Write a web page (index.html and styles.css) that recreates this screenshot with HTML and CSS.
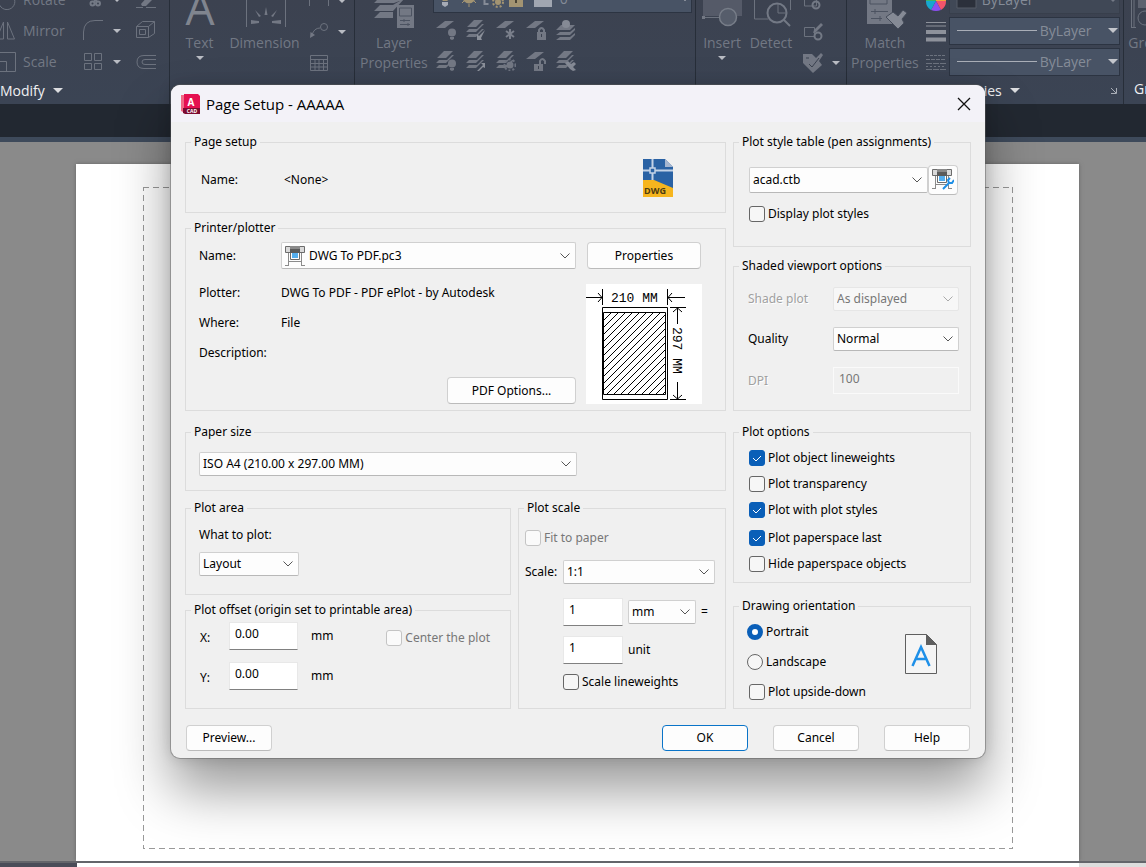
FILE: index.html
```html
<!DOCTYPE html>
<html lang="en">
<head>
<meta charset="utf-8">
<title>Page Setup - AAAAA</title>
<link rel="stylesheet" href="styles.css">
</head>
<body>
<svg class="defs" aria-hidden="true">
  <symbol id="sheet" viewBox="0 0 20 20"><path d="M0 8 9 1h9L9 8z"/></symbol>
  <symbol id="stack" viewBox="0 0 20 20"><path d="M1 7 8 0h9l-7 7zM0 12l3-3h8l5-5h2l-8 8zM0 17l3-3h8l5-5h2l-8 8z"/></symbol>
  <symbol id="bulb" viewBox="0 0 20 20"><circle cx="16" cy="12.500" r="4"/><path d="M14 17h4v2l-2 1-2-1z"/></symbol>
  <symbol id="plotter" viewBox="0 0 20 20">
    <path d="M.5 .5h19v6H.5z" fill="#d9d9d9" stroke="#6c6c6c"/>
    <path d="M5 0h10v3H5z" fill="#8a8a8a"/><path d="M5 3h10v4H5z" fill="#5b5b5b"/>
    <path d="M5.500 7v6.500h9V7" fill="#fff" stroke="#6c6c6c"/><path d="M7 7h6v5H7z" fill="#55aeee"/>
    <path d="M3.500 7v12M16.500 7v12M3 15.500h14M0 19.500h4M16 19.500h4" stroke="#8b8b8b" fill="none"/>
  </symbol>
</svg>

<div class="app">
  <header class="ribbon">
    <section class="panel modify">
      <div class="tools">
        <svg class="ico" viewBox="-4 -11 22 22"><path d="M-1 0a8 8 0 1 0 15-2" class="ln"/></svg><span>Rotate</span>
        <svg class="ico" viewBox="84 -10 22 22"><path d="M94 -4l4 7M99-4l-4 7" class="ln2"/><circle cx="93.500" cy="4.500" r="2" class="ln2"/><circle cx="99" cy="4.500" r="2" class="ln2"/></svg><i class="tri"></i>
        <svg class="ico" viewBox="134 -10 22 22"><path d="M140 5l8-9 5 3-8 8h-4z" class="fl"/><path d="M135 8.500h7M145 8.500h10" class="ln"/></svg>
        <svg class="ico" viewBox="-4 20 22 22"><path d="M3.500 22v17h-7zM7.500 22v17h7z" class="ln"/></svg><span>Mirror</span>
        <svg class="ico" viewBox="84 20 22 22"><path d="M84.500 40V32Q85 20.500 96 20.500h8" class="ln"/></svg><i class="tri"></i>
        <svg class="ico" viewBox="134 20 22 22"><path d="M135.500 26.500h12v11h-12zM138.500 29.500h6v5h-6zM135.500 26.500l6-5h12v12l-6 4M147.500 26.500l6-5" class="ln"/></svg>
        <svg class="ico" viewBox="-4 50 22 22"><path d="M-4 51.500H15.500v19H-4M-4 60.500H6.500v10" class="ln"/></svg><span>Scale</span>
        <svg class="ico" viewBox="84 50 22 22"><path d="M85.500 52.500h7v7h-7zM95.500 52.500h7v7h-7zM85.500 62.500h7v6h-7zM95.500 62.500h7v6h-7z" class="ln"/></svg><i class="tri"></i>
        <svg class="ico" viewBox="134 50 22 22"><path d="M155 54.500h-12q-7 0-7 6.500t7 6.500h12M155 58.500h-11q-3 0-3 2.500t3 2.500h11" class="ln"/></svg>
      </div>
      <h2>Modify <i class="tri big"></i></h2>
    </section>

    <section class="panel annot">
      <div class="cols">
        <button class="large"><svg viewBox="177 -15 44 46"><text x="199" y="25" class="bigA">A</text></svg><span>Text</span><i class="tri"></i></button>
        <button class="large"><svg viewBox="243 -15 44 46"><path d="M246.500-15V27M285.500-15V27" class="ln"/><path d="M264.500 15l1.500-8 1.500 8zM259 17l-4-7 6 6zM273 17l4-7-6 6zM259 21l-8-1v4l8-1zM272 21l9-1v4l-9-1z" class="fl"/></svg><span>Dimension</span></button>
        <div class="mini">
          <svg class="ico" viewBox="309 -10 22 22"><path d="M310.500-10V6M329.500-10V6" class="ln"/></svg><i class="tri"></i>
          <svg class="ico" viewBox="309 20 22 22"><circle cx="325" cy="26" r="3.500" class="ln"/><path d="M321 27q-6 0-8 7" class="ln"/><path d="M311 37l.500-6 4.500 3z" class="fl"/></svg><i class="tri"></i>
          <svg class="ico" viewBox="309 50 22 22"><path d="M311.500 53.500h17v15h-17zM311 57.500h18M311 61.500h18M311 65h18M316 58v10M320 58v10M324.500 58v10" class="ln"/></svg>
        </div>
      </div>
    </section>

    <section class="panel layers">
      <div class="cols">
        <button class="large"><svg viewBox="372 -15 44 46"><path d="M374 3l9-9h26l-4 5-11 4zM374 11l6-6h13l12-7-12 13zM374 18l6-6h13v6z" class="fl"/><path d="M397 5h17v23h-17z" class="fl"/><path d="M399.500 8h12v8h-12zM400 20.500h10M400 24.500h10M404 19v3M408 23v3" stroke="#4c5361" fill="none"/></svg><span>Layer<br>Properties</span></button>
        <div class="layerbox">
          <div class="combo"><select aria-label="Layer"><option>0</option></select>
            <svg class="over" viewBox="434 -12 124 24" width="124" height="24"><path d="M441-4h11q0 4-4 7h-4q-3-3-3-7z" fill="#a39472"/><path d="M443 4h6v3l-3 2-3-2z" fill="#a5aab5"/><circle cx="470" cy="-1" r="6.500" fill="#a39472"/><path d="M463 5l3-3M477 5l-3-3M470 6v3" stroke="#a39472"/><path d="M485.500-5V6h4" stroke="#858b97" stroke-width="2" fill="none"/><circle cx="499" cy="4" r="3" fill="#a39472"/><circle cx="499" cy="4" r="5" fill="none" stroke="#a39472" stroke-width="2" stroke-dasharray="2 2"/><path d="M510-2h14V9h-14z" fill="#a39472"/><path d="M517 1v4" stroke="#4a4436" stroke-width="2"/><path d="M535-10h18V9h-18z" fill="#a0a6b1"/></svg></div>
          <div class="layertools">
            <svg class="ico20"><use href="#sheet"/><use href="#bulb"/></svg>
            <svg class="ico20"><use href="#stack"/><path d="M11 20v-6l2 2 6-6-4 8 1 2z" fill="#8b909a"/></svg>
            <svg class="ico20"><use href="#sheet"/><path d="M14 9v10M10 11l8 6M18 11l-8 6" stroke="#7a7f8b" stroke-width="2"/></svg>
            <svg class="ico20"><use href="#sheet"/><path d="M11 12h9v8h-9z"/><path d="M13 12v-2q2.500-4 5 0v2" class="ln2"/><path d="M15.500 14v3" stroke="#3b4250"/></svg>
            <svg class="ico20"><path d="M0 10l5-5h14l-5 5zM0 15l4-3h10l5-4v2l-5 5zM0 20l4-3h10l5-4v2l-5 5z"/><circle cx="10" cy="4" r="4" fill="#858a95"/></svg>
            <svg class="ico20"><use href="#stack"/><use href="#bulb"/></svg>
            <svg class="ico20"><use href="#stack"/><path d="M11 20l6-6-2-2h4v5l-2-1-5 5z" fill="#8b909a"/></svg>
            <svg class="ico20"><use href="#stack"/><circle cx="14" cy="14" r="3.500"/><circle cx="14" cy="14" r="5.500" fill="none" stroke="#6d7380" stroke-width="2" stroke-dasharray="2 2"/></svg>
            <svg class="ico20"><use href="#sheet"/><path d="M8 13h9v7H8z"/><path d="M14 13v-3q2-4 5 0v3" class="ln2"/><path d="M12.500 15v3" stroke="#3b4250"/></svg>
            <svg class="ico20"><use href="#stack"/><path d="M9 12l3-2 3 3 3-2 2 2-3 3 3 3-3 1-3-2z" fill="#858a95"/></svg>
          </div>
        </div>
      </div>
    </section>

    <section class="panel block">
      <div class="cols">
        <button class="large"><svg viewBox="700 -15 44 46"><path d="M703-15h39V16H703z" class="fl" opacity=".45"/><path d="M703 17.500h20" class="ln"/><path d="M702 16h3v3h-3z" class="fl"/><circle cx="728" cy="17" r="8.500" fill="#565d6b" stroke="#777d88" stroke-width="1.500"/></svg><span>Insert</span><i class="tri"></i></button>
        <button class="large"><svg viewBox="749 -15 44 46"><path d="M754.500-15V19h14M790.500-15V10" class="ln"/><circle cx="777" cy="13" r="9.500" class="ln2"/><path d="M784 20l6 6" class="ln2"/><path d="M778 4v9h9" class="ln"/></svg><span>Detect</span></button>
        <div class="mini">
          <svg class="ico" viewBox="801 -10 22 22"><path d="M803.500-6h12V6h-12z" class="ln"/><circle cx="815" cy="5" r="3.500" class="ln2"/></svg><i></i>
          <svg class="ico" viewBox="801 20 22 22"><path d="M803.500 26.500h10v9h-10z" class="ln"/><circle cx="817" cy="35" r="3.500" class="ln2"/><path d="M812 32l1-3 7-7 2 2-7 7z" class="fl"/></svg><i></i>
          <svg class="ico" viewBox="801 50 22 22"><path d="M802 52h9l4 4 5-5 2 2-4 6 3 4-9 8-10-10z" class="fl"/><path d="M805 56h3M808 62l3 3 7-9" stroke="#3b4250" fill="none"/></svg><i class="tri"></i>
        </div>
      </div>
    </section>

    <section class="panel props">
      <div class="cols">
        <button class="large"><svg viewBox="863 -15 44 46"><path d="M867-15h25V24h-25z" class="fl"/><path d="M870-10h17V4h-17zM871 11.500h17M871 18.500h11M875 9v5M880 16v5" stroke="#4c5361" fill="none"/><path d="M886 17l7-5 5 4 5-6 4 3-5 6 2 4-6 6z" fill="#858a95" stroke="#454c5a"/></svg><span>Match<br>Properties</span></button>
        <div class="mini one">
          <svg class="ico" viewBox="925 -10 22 22"><path d="M936 1V-9A10 10 0 0 1 946 1z" fill="#f0a43a"/><path d="M936 1h10a10 10 0 0 1-5 9z" fill="#f2546b"/><path d="M936 1l5 9q-5 2-10 0z" fill="#8b4ff0"/><path d="M936 1l-5 9a10 10 0 0 1-5-9z" fill="#16a7cf"/><path d="M936 1h-10A10 10 0 0 1 936-9z" fill="#39b56b"/></svg>
          <svg class="ico" viewBox="925 20 22 22"><path d="M926 21.500h20M926 25h20" stroke="#8e929b"/><path d="M926 31h20M926 38.500h20" stroke="#8e929b" stroke-width="4"/></svg>
          <svg class="ico" viewBox="925 50 22 22"><path d="M926 53.500h20" class="ln" stroke-dasharray="3 1"/><path d="M926 57.500h20" class="ln" stroke-dasharray="4 1"/><path d="M926 61.500h20M926 67.500h20" class="ln" stroke-dasharray="6 1"/><path d="M926 64.500h20" class="ln" stroke-dasharray="2 2"/></svg>
        </div>
        <div class="stackbox">
          <div class="combo dimmed"><select aria-label="Color"><option>ByLayer</option></select><svg class="over" width="30" height="24"><path d="M8 0h19v21H8z" fill="#2b303b" stroke="#555b67"/></svg></div>
          <div class="combo"><select aria-label="Lineweight"><option>ByLayer</option></select><svg class="over" width="90" height="24"><path d="M8 12.500h80" stroke="#a9aeb7"/></svg></div>
          <div class="combo"><select aria-label="Linetype"><option>ByLayer</option></select><svg class="over" width="90" height="24"><path d="M8 12.500h80" stroke="#a9aeb7"/></svg></div>
        </div>
      </div>
      <h2>Properties <i class="tri big"></i><svg class="launch" viewBox="0 0 8 8"><path d="M1 1l5 5M6.500 1v5.500H1" stroke="#a9aeb7" fill="none"/></svg></h2>
    </section>

    <section class="panel groups">
      <div class="cols"><button class="large"><svg viewBox="1127 -15 44 46"><path d="M1134-15V27M1131 27.500h5M1131.500-15V27" class="ln"/><path d="M1138-15h12V8h-12z" class="fl" opacity=".6"/><circle cx="1145" cy="18" r="7" class="ln"/></svg><span>Group</span></button></div>
      <h2>Groups</h2>
    </section>
  </header>
  <div class="tabs"></div>
  <main class="canvas"><div class="paper"><svg class="printable"><rect width="100%" height="100%"/></svg></div></main>
  <footer class="status"><i></i><b></b></footer>
</div>

<form class="dialog" role="dialog" aria-labelledby="dlg-title">
  <header class="titlebar">
    <svg width="20" height="20" viewBox="0 0 20 20"><path d="M0 1h4v18l-4-2z" fill="#f06a86"/><path d="M3 0h14l2 2v12H3z" fill="#e51050"/><path d="M2 14h17v6H4l-2-1z" fill="#7c0c31"/><text x="10" y="12" class="logo-a">A</text><text x="11" y="19" class="logo-cad">CAD</text></svg>
    <h1 id="dlg-title">Page Setup - AAAAA</h1>
    <button type="button" class="close" aria-label="Close"><svg width="14" height="14" viewBox="0 0 14 14"><path d="M1 1l12 12M13 1L1 13" stroke="#111" stroke-width="1.300"/></svg></button>
  </header>

  <div class="body">
    <div class="left">
      <fieldset><legend>Page setup</legend>
        <div class="g-page"><span class="lbl">Name:</span><span>&lt;None&gt;</span>
          <svg class="dwg" width="30" height="38" viewBox="0 0 30 38"><path d="M0 0h22l8 8v30H0z" fill="#2a62a4"/><path d="M22 0v8h8z" fill="#a5b6d0"/><path d="M0 21h11l19 8v9H0z" fill="#f6b51e"/><path d="M0 11.500h30M9.500 0v21" stroke="#c3d2e6" stroke-width="2" fill="none"/><path d="M7 9h5v5H7z" fill="#2a62a4" stroke="#c3d2e6" stroke-width="1.500"/><text x="12" y="35" class="dwg-t">DWG</text></svg>
        </div>
      </fieldset>

      <fieldset class="s6"><legend>Printer/plotter</legend>
        <div class="g-printer">
          <div class="pcol">
            <div class="row"><label class="lbl" for="printer">Name:</label><div class="iconsel"><select id="printer"><option>DWG To PDF.pc3</option></select><svg class="over" width="20" height="20"><use href="#plotter"/></svg></div></div>
            <dl>
              <dt>Plotter:</dt><dd>DWG To PDF - PDF ePlot - by Autodesk</dd>
              <dt>Where:</dt><dd>File</dd>
              <dt>Description:</dt><dd></dd>
            </dl>
            <button type="button" class="btn pdf">PDF Options...</button>
          </div>
          <div class="qcol">
            <button type="button" class="btn">Properties</button>
            <svg class="preview" width="116" height="120" viewBox="586 284 116 120">
              <defs><pattern id="hatch" width="7" height="7" patternUnits="userSpaceOnUse"><path d="M-1 8L8-1M-1 1L1-1M6 8l2-2" stroke="#000"/></pattern></defs>
              <path d="M586 284h116v120H586z" fill="#fff"/>
              <path d="M604 312h61v83h-61z" fill="url(#hatch)"/>
              <path d="M602.500 307.500h65v92h-65zM603.500 312.500h62v82h-62zM602.500 289v16M667.500 289v16M586 297.500h16M598 293l4 4.500-4 4.500M668 297.500h17M672 293l-4 4.500 4 4.500M670 307.500h16M670 399.500h16M677.500 308v16M677.500 382v17M673 312l4.500-4 4.500 4M673 395l4.500 4 4.500-4" stroke="#000" fill="none"/>
              <text x="611" y="302">210 MM</text><text transform="translate(673 327) rotate(90)">297 MM</text>
            </svg>
          </div>
        </div>
      </fieldset>

      <fieldset class="s12"><legend>Paper size</legend>
        <div class="g-paper"><select aria-label="Paper size"><option>ISO A4 (210.00 x 297.00 MM)</option></select></div>
      </fieldset>

      <div class="pair">
        <div class="pairleft">
          <fieldset><legend>Plot area</legend>
            <div class="g-area"><label for="what">What to plot:</label><select id="what"><option>Layout</option></select></div>
          </fieldset>
          <fieldset class="s6"><legend>Plot offset (origin set to printable area)</legend>
            <div class="g-offset">
              <div class="off"><label for="ox">X:</label><input id="ox" type="text" value="0.00"><span>mm</span></div>
              <label class="chk"><input type="checkbox" disabled>Center the plot</label>
              <div class="off"><label for="oy">Y:</label><input id="oy" type="text" value="0.00"><span>mm</span></div>
            </div>
          </fieldset>
        </div>
        <fieldset class="scale"><legend>Plot scale</legend>
          <div class="g-scale">
            <label class="chk"><input type="checkbox" disabled>Fit to paper</label>
            <div class="row sc"><label for="scale">Scale:</label><select id="scale"><option>1:1</option></select></div>
            <div class="row in a"><input type="text" aria-label="Paper units" value="1"><select aria-label="Unit"><option>mm</option></select><span>=</span></div>
            <div class="row in b"><input type="text" id="du" value="1"><label for="du">unit</label></div>
            <label class="chk in c"><input type="checkbox">Scale lineweights</label>
          </div>
        </fieldset>
      </div>
    </div>

    <div class="right">
      <fieldset><legend>Plot style table (pen assignments)</legend>
        <div class="g-style">
          <div class="row"><select aria-label="Plot style table"><option>acad.ctb</option></select><button type="button" class="btn edit" aria-label="Edit"><svg width="22" height="22" viewBox="0 0 22 22"><use href="#plotter" width="20" height="20"/><path d="M11 20l6-6M17 14l-1-3 2-2M17 14l3 0 2-3" stroke="#1e8fe6" stroke-width="2" fill="none"/></svg></button></div>
          <label class="chk"><input type="checkbox">Display plot styles</label>
        </div>
      </fieldset>
      <fieldset class="s10"><legend>Shaded viewport options</legend>
        <div class="g-shade">
          <label for="shade" class="off-l">Shade plot</label><select id="shade" disabled><option>As displayed</option></select>
          <label for="quality">Quality</label><select id="quality"><option>Normal</option></select>
          <label for="dpi" class="off-l">DPI</label><input id="dpi" type="text" value="100" disabled>
        </div>
      </fieldset>
      <fieldset class="s12"><legend>Plot options</legend>
        <div class="g-opts">
          <div><label class="chk"><input type="checkbox" checked>Plot object lineweights</label>
          <label class="chk"><input type="checkbox">Plot transparency</label>
          <label class="chk"><input type="checkbox" checked>Plot with plot styles</label></div>
          <div><label class="chk"><input type="checkbox" checked>Plot paperspace last</label>
          <label class="chk"><input type="checkbox">Hide paperspace objects</label></div>
        </div>
      </fieldset>
      <fieldset class="s14"><legend>Drawing orientation</legend>
        <div class="g-orient">
          <div class="stackcol"><label class="chk"><input type="radio" name="o" checked>Portrait</label>
          <label class="chk"><input type="radio" name="o">Landscape</label>
          <label class="chk ud"><input type="checkbox">Plot upside-down</label></div>
          <svg width="32" height="40" viewBox="0 0 32 40"><path d="M.500.500h21l10 10v29H.500z" fill="#f5f5f5" stroke="#5f5f5f"/><path d="M21 0v11h11z" fill="#5f5f5f"/><path d="M7.500 32L16 13l8.500 19M10.500 25h11" stroke="#1f90e8" stroke-width="2.500" fill="none"/></svg>
        </div>
      </fieldset>
    </div>
  </div>

  <footer class="actions">
    <button type="button" class="btn">Preview...</button>
    <div><button type="submit" class="btn ok">OK</button><button type="button" class="btn">Cancel</button><button type="button" class="btn">Help</button></div>
  </footer>
</form>
</body>
</html>
```
FILE: styles.css
```css
* { box-sizing: border-box; }
body { margin: 0; overflow: hidden; background: #888; }
h1, h2, dl, dd { margin: 0; font-weight: normal; }
button, select, input { font: inherit; color: inherit; margin: 0; }
.defs { position: absolute; width: 0; height: 0; }
.over { position: absolute; pointer-events: none; }

/* application window */
.app { display: flex; flex-direction: column; height: 100vh; font: 14px/20px "Open Sans", "Noto Sans", sans-serif; color: #727884; }
.ribbon { display: flex; height: 104px; background: linear-gradient(#3c4250, #3b4454); overflow: hidden; flex: none; }
.panel { display: flex; flex-direction: column; flex: none; margin-top: -16px; border-right: 1px solid #272e39; }
.panel h2 { display: flex; align-items: center; gap: 8px; height: 30px; font-size: 14px; color: #f0f0f2; }
.cols { display: flex; height: 93px; padding-top: 1px; }
.modify { width: 170px; }
.annot { width: 185px; }
.layers { width: 341px; }
.block { width: 151px; }
.props { width: 277px; }
.groups { flex: 1; border: 0; }
.tools { display: grid; grid-template-columns: 23px 60px 22px 23px 29px; grid-auto-rows: 31px; align-items: center; justify-items: start; }
.tools .tri { justify-self: center; }
.tools .ico:nth-child(5n) { justify-self: end; }
.tools .ico:nth-child(5n+1) { margin-left: -4px; }
.ico { width: 22px; height: 22px; }
.ico20 { width: 20px; height: 20px; fill: #737884; }
.ln { fill: none; stroke: #6c727e; }
.ln2 { fill: none; stroke: #737985; stroke-width: 2; }
.fl { fill: #737884; }
.tri { border: 4px solid transparent; border-top-color: #b9bcc3; border-bottom: 0; }
.tri.big { border-width: 5px; border-bottom: 0; border-top-color: #dcdde0; }
.large { display: flex; flex-direction: column; align-items: center; padding: 0; border: 0; background: none; text-align: center; }
.large svg { width: 44px; height: 46px; flex: none; }
.large span { margin-top: 2px; }
.large .tri { margin-top: 3px; }
.annot .cols { padding-left: 8px; gap: 9px; }
.annot .large:first-child { width: 44px; }
.bigA { font: 46px "Open Sans", "Noto Sans", sans-serif; fill: #80858f; text-anchor: middle; }
.mini { display: grid; grid-template-columns: 22px 24px; grid-auto-rows: 31px; align-items: center; justify-items: center; }
.layers .cols { padding-left: 5px; gap: 5px; }
.layerbox { flex: 1; padding-right: 3px; }
.layertools { display: grid; grid-template-columns: repeat(5, 20px); gap: 11px 10px; padding: 7px 3px; }
.combo { position: relative; }
.combo select { appearance: none; display: block; width: 100%; height: 28px; border: 1px solid #2c3442; background: #485365; color: #858c98; padding: 0 0 0 90px; font-size: 14px; outline: 0; border-radius: 0; }
.combo::after { content: ""; position: absolute; right: 2px; top: 11px; border: 5px solid transparent; border-top-color: #c3c6cc; border-bottom: 0; }
.combo .over { left: 0; top: 1px; }
.layerbox select { padding-left: 126px; }
.block .cols { padding-left: 4px; gap: 5px; }
.block .large { width: 44px; }
.block .mini { margin-left: 4px; }
.props .cols { padding-left: 4px; }
.mini.one { grid-template-columns: 22px; margin-left: 6px; }
.stackbox { flex: 1; display: grid; gap: 3px; padding: 1px 3px 0 2px; align-content: start; }
.dimmed select { background: #404856; padding-left: 32px; border-color: #383f4c; }
.dimmed::after { border-top-color: #737985; }
.props h2 { padding-left: 87px; }
.launch { width: 8px; height: 8px; margin: 0 5px 0 auto; }
.groups .cols { padding-left: 3px; }
.groups h2 { padding-left: 10px; }
.annot .large { min-width: 0; }
.annot .cols { padding-left: 8px; }
.tabs { flex: none; height: 38px; background: #222831; border-bottom: 5px solid #3e4a5b; }
.canvas { flex: 1; display: flex; padding: 22px 67px 0 76px; background: #8a8a8a; }
.paper { flex: 1; display: flex; padding: 23px 66px 12px 67px; background: #fff; box-shadow: 0 0 4px #666; }
.printable { flex: 1; width: 100%; height: auto; }
.printable rect { fill: none; stroke: #999; stroke-width: 2; stroke-dasharray: 6 4; }
.status { display: flex; flex: none; height: 6px; border-top: 2px solid #63656a; background: #ddd; position: relative; }
.status i { width: 77px; background: #494c58; }
.status b { flex: 1; margin-right: 67px; background: #fff; }

/* dialog */
.dialog { position: absolute; left: 171px; right: 161px; top: 85px; border-radius: 9px; background: #f0f0f0; color: #000; font: 12px/20px "Noto Sans", "Open Sans", sans-serif; box-shadow: 0 0 0 1px rgba(90,90,90,.45), 0 0 14px rgba(0,0,0,.15), 0 32px 54px rgba(0,0,0,.4); }
.titlebar { display: flex; align-items: center; gap: 5px; height: 37px; padding: 0 14px 0 10px; border-radius: 9px 9px 0 0; background: #f3f2f8; }
.titlebar h1 { flex: 1; font: 15px/20px "Open Sans", "Noto Sans", sans-serif; }
.close { display: flex; padding: 0; border: 0; background: none; }
.logo-a { font: bold 10px "Open Sans", sans-serif; fill: #fff; text-anchor: middle; }
.logo-cad { font: bold 5px "Open Sans", sans-serif; fill: #fff; text-anchor: middle; }
.dwg-t { font: bold 9px "Open Sans", sans-serif; fill: #4d3c12; text-anchor: middle; }
.body { display: grid; grid-template-columns: 541fr 238fr; gap: 7px; padding: 11px 14px 0; }
fieldset { min-width: 0; margin: 0; padding: 0; border: 1px solid #dcdcdc; }
legend { margin-left: 5px; padding: 0 3px; line-height: 18px; }
.s6 { margin-top: 6px; }
.s10 { margin-top: 10px; }
.s12 { margin-top: 12px; }
.s14 { margin-top: 14px; }
.row { display: flex; align-items: center; }
.dialog select { appearance: none; display: block; height: 24px; width: 100%; padding: 0 22px 0 3px; border: 1px solid #d0d0d0; border-bottom-color: #b8b8b8; border-radius: 2px; outline: 0; color: #000; background: #fdfdfd url("data:image/svg+xml,%3Csvg xmlns='http://www.w3.org/2000/svg' width='10' height='6'%3E%3Cpath d='M.5.5L5 5 9.500.5' fill='none' stroke='%23555'/%3E%3C/svg%3E") no-repeat right 5px center; }
.dialog select:disabled { color: #777; opacity: 1; border-color: #e6e6e6; background-color: #f7f7f7; background-image: url("data:image/svg+xml,%3Csvg xmlns='http://www.w3.org/2000/svg' width='10' height='6'%3E%3Cpath d='M.5.5L5 5 9.500.5' fill='none' stroke='%23aaa'/%3E%3C/svg%3E"); }
.dialog input[type=text] { height: 28px; width: 69px; padding: 0 5px 5px; border: 1px solid #e8e8e8; border-bottom-color: #808080; background: #fff; outline: 0; }
.dialog input[type=text]:disabled { width: 100%; height: 27px; color: #777; background: #f0f0f0; border-color: #fafafa; }
.btn { height: 27px; padding: 0; border: 1px solid #d0d0d0; border-bottom-color: #bbb; border-radius: 4px; background: #fdfdfd; }
.chk { display: flex; align-items: center; gap: 3px; white-space: nowrap; }
.chk input { appearance: none; width: 16px; height: 16px; border: 1px solid #666; border-radius: 3px; background: #f6f6f6; }
.chk input:checked { border-color: #0a5fb8; background: #0a5fb8 url("data:image/svg+xml,%3Csvg xmlns='http://www.w3.org/2000/svg' width='10' height='8'%3E%3Cpath d='M1 4l3 3 5-5' fill='none' stroke='white'/%3E%3C/svg%3E") no-repeat center; }
.chk input[type=radio] { border-radius: 50%; }
.chk input[type=radio]:checked { background: #fff; border-width: 5px; }
.chk input:disabled { border-color: #c4c4c4; background: #fafafa; }
.chk:has(:disabled) { color: #777; }
.off-l { color: #a0a0a0; text-shadow: 1px 1px #fff; }

.g-page { display: flex; align-items: center; padding: 8px 52px 15px 15px; }
.g-page span { padding-top: 4px; }
.g-page .lbl { width: 83px; }
.dwg { margin-left: auto; }
.g-printer { display: flex; gap: 10px; padding: 5px 23px 6px 13px; }
.pcol { flex: 1; display: flex; flex-direction: column; }
.pcol .lbl { width: 82px; }
.iconsel { flex: 1; position: relative; }
.iconsel select { height: 27px; padding-left: 27px; }
.iconsel .over { left: 4px; top: 4px; }
dl { display: grid; grid-template-columns: 82px 1fr; row-gap: 10px; margin: 14px 0; }
.pdf { align-self: flex-end; width: 129px; }
.qcol { display: flex; flex-direction: column; justify-content: space-between; width: 116px; }
.qcol .btn { margin: 0 1px; }
.preview text { font: 13px "Liberation Mono", monospace; white-space: pre; }
.g-paper { padding: 11px 148px 14px 13px; }
.pair { display: grid; grid-template-columns: 326fr 208fr; gap: 7px; margin-top: 8px; }
.g-area { padding: 8px 13px 18px; }
.g-area label { display: block; margin-bottom: 7px; }
.g-area select { width: 100px; }
.g-offset { display: grid; grid-template-columns: 1fr auto; row-gap: 12px; padding: 3px 20px 18px 14px; }
.off { display: flex; align-items: center; }
.off label { width: 29px; padding-top: 3px; }
.off input { margin-right: 13px; }
.g-offset .chk { padding-top: 3px; }
.g-scale { padding: 11px 10px 16px 6px; }
.sc { margin-top: 12px; }
.sc label { width: 38px; flex: none; }
.in { margin-left: 38px; }
.a { margin-top: 14px; gap: 5px; }
.b { margin-top: 10px; gap: 5px; }
.c { margin-top: 8px; }
.g-scale input[type=text] { width: 60px; }
.a select { width: 68px; }
.g-style { padding: 14px 12px 22px 15px; }
.g-style .chk { margin-top: 9px; }
.edit { display: flex; align-items: center; justify-content: center; flex: none; width: 30px; height: 30px; }
.g-style .row select { height: 26px; }
.g-shade { display: grid; grid-template-columns: 85px 1fr; row-gap: 16px; align-items: center; padding: 12px 11px 16px 14px; }
.g-opts { display: grid; gap: 8px; padding: 7px 15px 8px; }
.g-opts div { display: grid; gap: 6px; }
.g-orient { display: flex; align-items: flex-start; justify-content: space-between; padding: 7px 33px 6px 13px; }
.g-orient svg { margin-top: 12px; }
.stackcol { display: grid; gap: 10px; }
.ud { margin-left: 2px; }
.actions { display: flex; justify-content: space-between; padding: 16px 15px 7px; }
.actions div { display: flex; gap: 25px; }
.actions .btn { width: 86px; height: 26px; }
.actions .ok { border-color: #0a74c8; }
```
